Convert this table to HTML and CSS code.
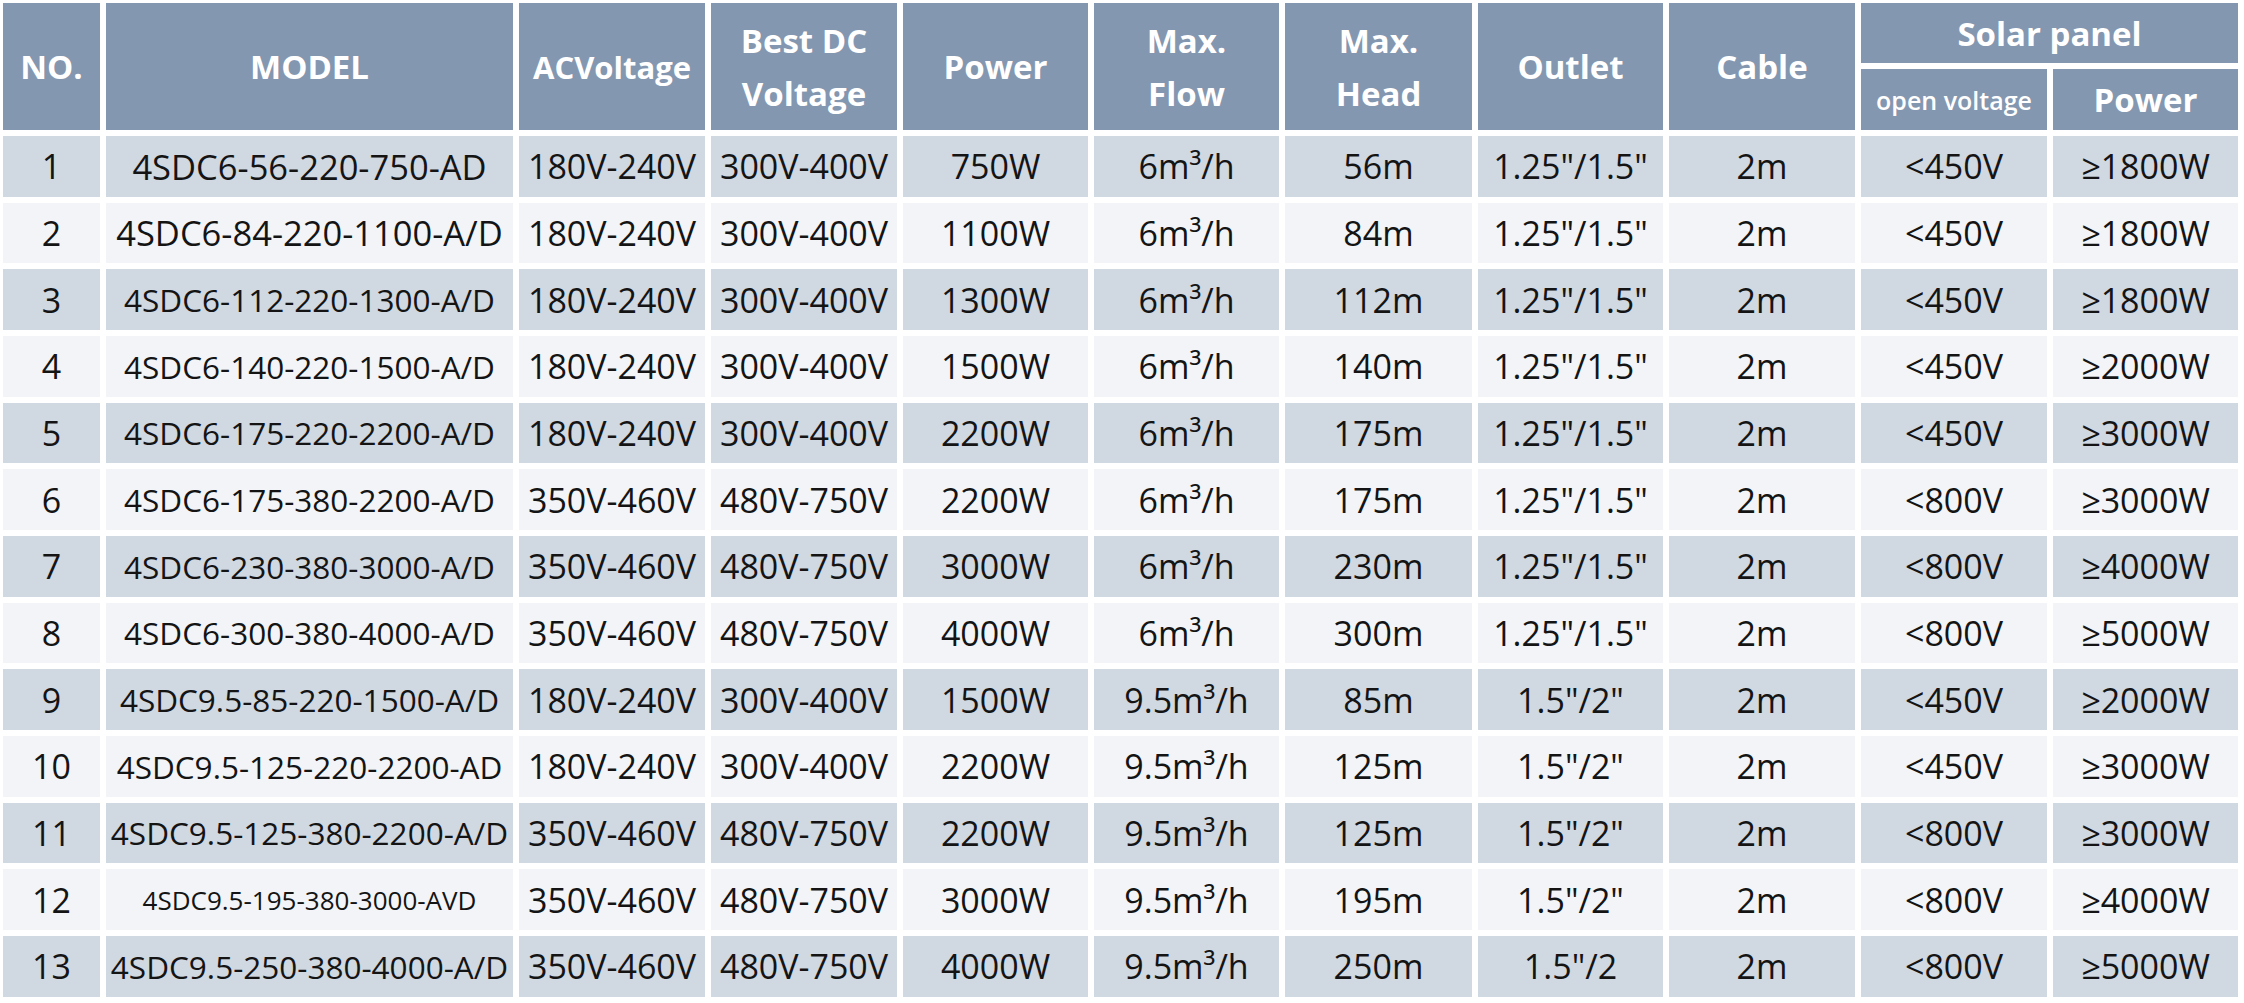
FILE: index.html
```html
<!DOCTYPE html>
<html lang="en">
<head>
<meta charset="utf-8">
<title>4SDC Solar Pump Specifications</title>
<link rel="stylesheet" href="styles.css">
</head>
<body>
<div class="spec">
  <div class="h tall">NO.</div>
  <div class="h tall">MODEL</div>
  <div class="h tall narrow">ACVoltage</div>
  <div class="h tall two">Best DC<br>Voltage</div>
  <div class="h tall">Power</div>
  <div class="h tall two">Max.<br>Flow</div>
  <div class="h tall two">Max.<br>Head</div>
  <div class="h tall">Outlet</div>
  <div class="h tall">Cable</div>
  <div class="h group">Solar panel</div>
  <div class="h sub small">open voltage</div>
  <div class="h sub">Power</div>

  <div class="c o">1</div><div class="c o m m1">4SDC6-56-220-750-AD</div><div class="c o">180V-240V</div><div class="c o">300V-400V</div><div class="c o">750W</div><div class="c o">6m³/h</div><div class="c o">56m</div><div class="c o">1.25"/1.5"</div><div class="c o">2m</div><div class="c o">&lt;450V</div><div class="c o">≥1800W</div>

  <div class="c e">2</div><div class="c e m m2">4SDC6-84-220-1100-A/D</div><div class="c e">180V-240V</div><div class="c e">300V-400V</div><div class="c e">1100W</div><div class="c e">6m³/h</div><div class="c e">84m</div><div class="c e">1.25"/1.5"</div><div class="c e">2m</div><div class="c e">&lt;450V</div><div class="c e">≥1800W</div>

  <div class="c o">3</div><div class="c o m">4SDC6-112-220-1300-A/D</div><div class="c o">180V-240V</div><div class="c o">300V-400V</div><div class="c o">1300W</div><div class="c o">6m³/h</div><div class="c o">112m</div><div class="c o">1.25"/1.5"</div><div class="c o">2m</div><div class="c o">&lt;450V</div><div class="c o">≥1800W</div>

  <div class="c e">4</div><div class="c e m">4SDC6-140-220-1500-A/D</div><div class="c e">180V-240V</div><div class="c e">300V-400V</div><div class="c e">1500W</div><div class="c e">6m³/h</div><div class="c e">140m</div><div class="c e">1.25"/1.5"</div><div class="c e">2m</div><div class="c e">&lt;450V</div><div class="c e">≥2000W</div>

  <div class="c o">5</div><div class="c o m">4SDC6-175-220-2200-A/D</div><div class="c o">180V-240V</div><div class="c o">300V-400V</div><div class="c o">2200W</div><div class="c o">6m³/h</div><div class="c o">175m</div><div class="c o">1.25"/1.5"</div><div class="c o">2m</div><div class="c o">&lt;450V</div><div class="c o">≥3000W</div>

  <div class="c e">6</div><div class="c e m">4SDC6-175-380-2200-A/D</div><div class="c e">350V-460V</div><div class="c e">480V-750V</div><div class="c e">2200W</div><div class="c e">6m³/h</div><div class="c e">175m</div><div class="c e">1.25"/1.5"</div><div class="c e">2m</div><div class="c e">&lt;800V</div><div class="c e">≥3000W</div>

  <div class="c o">7</div><div class="c o m">4SDC6-230-380-3000-A/D</div><div class="c o">350V-460V</div><div class="c o">480V-750V</div><div class="c o">3000W</div><div class="c o">6m³/h</div><div class="c o">230m</div><div class="c o">1.25"/1.5"</div><div class="c o">2m</div><div class="c o">&lt;800V</div><div class="c o">≥4000W</div>

  <div class="c e">8</div><div class="c e m">4SDC6-300-380-4000-A/D</div><div class="c e">350V-460V</div><div class="c e">480V-750V</div><div class="c e">4000W</div><div class="c e">6m³/h</div><div class="c e">300m</div><div class="c e">1.25"/1.5"</div><div class="c e">2m</div><div class="c e">&lt;800V</div><div class="c e">≥5000W</div>

  <div class="c o">9</div><div class="c o m">4SDC9.5-85-220-1500-A/D</div><div class="c o">180V-240V</div><div class="c o">300V-400V</div><div class="c o">1500W</div><div class="c o">9.5m³/h</div><div class="c o">85m</div><div class="c o">1.5"/2"</div><div class="c o">2m</div><div class="c o">&lt;450V</div><div class="c o">≥2000W</div>

  <div class="c e">10</div><div class="c e m">4SDC9.5-125-220-2200-AD</div><div class="c e">180V-240V</div><div class="c e">300V-400V</div><div class="c e">2200W</div><div class="c e">9.5m³/h</div><div class="c e">125m</div><div class="c e">1.5"/2"</div><div class="c e">2m</div><div class="c e">&lt;450V</div><div class="c e">≥3000W</div>

  <div class="c o">11</div><div class="c o m">4SDC9.5-125-380-2200-A/D</div><div class="c o">350V-460V</div><div class="c o">480V-750V</div><div class="c o">2200W</div><div class="c o">9.5m³/h</div><div class="c o">125m</div><div class="c o">1.5"/2"</div><div class="c o">2m</div><div class="c o">&lt;800V</div><div class="c o">≥3000W</div>

  <div class="c e">12</div><div class="c e m m12">4SDC9.5-195-380-3000-AVD</div><div class="c e">350V-460V</div><div class="c e">480V-750V</div><div class="c e">3000W</div><div class="c e">9.5m³/h</div><div class="c e">195m</div><div class="c e">1.5"/2"</div><div class="c e">2m</div><div class="c e">&lt;800V</div><div class="c e">≥4000W</div>

  <div class="c o">13</div><div class="c o m">4SDC9.5-250-380-4000-A/D</div><div class="c o">350V-460V</div><div class="c o">480V-750V</div><div class="c o">4000W</div><div class="c o">9.5m³/h</div><div class="c o">250m</div><div class="c o">1.5"/2</div><div class="c o">2m</div><div class="c o">&lt;800V</div><div class="c o">≥5000W</div>
</div>
</body>
</html>
```
FILE: styles.css
```css
html, body {
  margin: 0;
  padding: 0;
  background: #ffffff;
}

.spec {
  display: grid;
  grid-template-columns: 97px 407px 186px 186px 185px 185px 187px 185px 186px 186px 185px;
  grid-template-rows: 60px 61px repeat(13, 60.67px);
  gap: 6px;
  padding: 3px;
  width: max-content;
  font-family: "Open Sans", "Noto Sans", "DejaVu Sans", sans-serif;
}

.h {
  background: #8497b0;
  color: #ffffff;
  font-weight: 700;
  font-size: 33px;
  display: flex;
  align-items: center;
  justify-content: center;
  text-align: center;
  white-space: nowrap;
}

.narrow {
  font-size: 31px;
}

.tall {
  grid-row: span 2;
}

.two {
  line-height: 53px;
}

.group {
  grid-column: span 2;
}

.small {
  font-size: 25px;
  font-weight: 600;
}

.c {
  display: flex;
  align-items: center;
  justify-content: center;
  white-space: nowrap;
  color: #141414;
  font-size: 34px;
  overflow: hidden;
}

.o {
  background: #d0d8e2;
}

.e {
  background: #f2f4f8;
}

.m {
  font-size: 31.5px;
}

.m1 {
  font-size: 34.5px;
}

.m2 {
  font-size: 34.5px;
}

.m12 {
  font-size: 26px;
}
```
